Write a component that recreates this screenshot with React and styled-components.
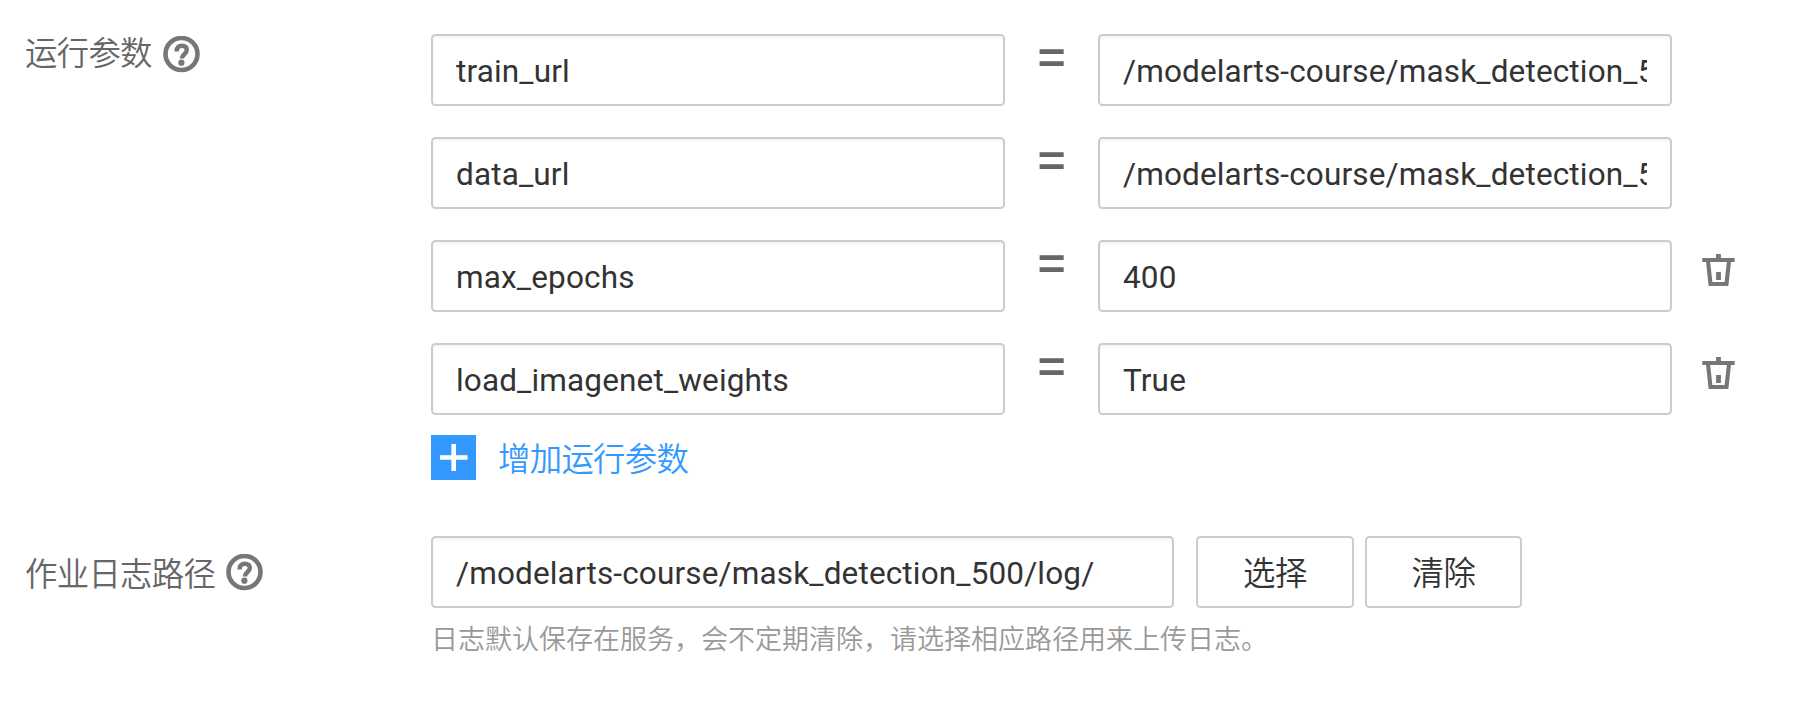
import React from "react";
import styled, { createGlobalStyle } from "styled-components";

const GlobalStyle = createGlobalStyle`
  * { box-sizing: border-box; }
  body {
    margin: 0;
    background: #fff;
    font-family: Roboto, "Noto Sans CJK SC", sans-serif;
    font-size: 31.5px;
    color: #333;
  }
`;

const Form = styled.form`
  display: flex;
  flex-direction: column;
  gap: 56px;
  padding: 34px 0 0 25px;
`;

const Field = styled.section`
  display: flex;
  align-items: flex-start;
`;

const FieldLabel = styled.div`
  display: flex;
  align-items: center;
  gap: 11px;
  flex: 0 0 406px;
  height: 40px;
  margin-top: ${(p) => p.$offset}px;
  color: #666;
  font-size: 32.4px;
  letter-spacing: -0.7px;
  font-weight: 350;
  white-space: nowrap;
`;

const LabelText = styled.span`
  padding-bottom: ${(p) => p.$lift}px;
`;

const FieldBody = styled.div`
  display: flex;
  flex-direction: column;
`;

const ParamList = styled.div`
  display: flex;
  flex-direction: column;
  gap: 31px;
`;

const ParamRow = styled.div`
  display: flex;
  align-items: flex-start;
  height: 72px;
`;

const TextInput = styled.input`
  width: ${(p) => p.$width}px;
  height: 72px;
  padding: 2px 23px 0;
  border: 2px solid #ccc;
  border-radius: 4.5px;
  outline: none;
  background: #fff;
  box-shadow: inset 0 2px 3px rgba(0, 0, 0, 0.045);
  color: #333;
  font: inherit;
  letter-spacing: 0.15px;
`;

const Equals = styled.span`
  width: 93px;
  height: 48px;
  line-height: 47px;
  text-align: center;
  font-size: 59px;
  font-weight: 400;
  color: #666;
`;

const IconButton = styled.button`
  display: flex;
  margin: 14px 0 0 30px;
  padding: 0;
  border: 0;
  background: none;
  color: #777;
`;

const AddButton = styled.button`
  display: flex;
  align-items: center;
  align-self: flex-start;
  gap: 22px;
  height: 45px;
  margin-top: 20px;
  padding: 0;
  border: 0;
  background: none;
  color: #39f;
  font: inherit;
  font-size: 32.4px;
  font-weight: 350;
  letter-spacing: -0.7px;
`;

const PathRow = styled.div`
  display: flex;
`;

const ActionButton = styled.button`
  width: ${(p) => p.$width}px;
  height: 72px;
  margin-left: ${(p) => p.$gap}px;
  padding: 0 0 4px;
  border: 2px solid #ccc;
  border-radius: 4.5px;
  background: #fff;
  color: #333;
  font: inherit;
  font-size: 32.4px;
  font-weight: 350;
  letter-spacing: -0.5px;
`;

const Hint = styled.p`
  margin: 12px 0 0;
  font-size: 27px;
  font-weight: 350;
  line-height: 40px;
  color: #999;
  white-space: nowrap;
`;

const HelpIcon = () => (
  <svg width="37" height="37" viewBox="0 0 37 37" fill="none" stroke="#777">
    <circle cx="18.5" cy="18" r="16" strokeWidth="4.6" />
    <path d="M13.7 15.4V14.6C13.7 11.6 15.6 9.7 18.8 9.7s5 1.7 5 4.4c0 4-5 4.3-5 8.5" strokeWidth="4.5" />
    <circle cx="18.4" cy="26.7" r="3.1" fill="#777" stroke="none" />
  </svg>
);

const TrashIcon = () => (
  <svg width="33" height="32" viewBox="0 0 33 32" fill="none" stroke="currentColor">
    <path d="M0.3 6H32.7" strokeWidth="4" />
    <path d="M16.5 0V5M16.5 18V26" strokeWidth="4.8" />
    <path d="M6 7L8.5 30H24.5L27 7" strokeWidth="4.1" />
  </svg>
);

const PlusIcon = () => (
  <svg width="45" height="45" viewBox="0 0 45 45">
    <rect width="45" height="45" fill="#39f" />
    <path d="M9 22.5H36.5M22.7 9V36" stroke="#fff" strokeWidth="4.6" />
  </svg>
);

const params = [
  { name: "train_url", value: "/modelarts-course/mask_detection_500/output/" },
  { name: "data_url", value: "/modelarts-course/mask_detection_500/dataset/" },
  { name: "max_epochs", value: "400", removable: true },
  { name: "load_imagenet_weights", value: "True", removable: true },
];

export default function App() {
  return (
    <>
      <GlobalStyle />
      <Form>
        <Field>
          <FieldLabel $offset={0}>
            <LabelText $lift={8}>运行参数</LabelText>
            <HelpIcon />
          </FieldLabel>
          <FieldBody>
            <ParamList>
              {params.map((p) => (
                <ParamRow key={p.name}>
                  <TextInput $width={574} defaultValue={p.name} spellCheck={false} />
                  <Equals>=</Equals>
                  <TextInput $width={574} defaultValue={p.value} spellCheck={false} />
                  {p.removable && (
                    <IconButton type="button" aria-label="删除">
                      <TrashIcon />
                    </IconButton>
                  )}
                </ParamRow>
              ))}
            </ParamList>
            <AddButton type="button">
              <PlusIcon />
              <LabelText $lift={2}>增加运行参数</LabelText>
            </AddButton>
          </FieldBody>
        </Field>
        <Field>
          <FieldLabel $offset={16}>
            <LabelText $lift={2}>作业日志路径</LabelText>
            <HelpIcon />
          </FieldLabel>
          <FieldBody>
            <PathRow>
              <TextInput
                $width={743}
                defaultValue="/modelarts-course/mask_detection_500/log/"
                spellCheck={false}
              />
              <ActionButton type="button" $width={158} $gap={22}>选择</ActionButton>
              <ActionButton type="button" $width={157} $gap={11}>清除</ActionButton>
            </PathRow>
            <Hint>日志默认保存在服务，会不定期清除，请选择相应路径用来上传日志。</Hint>
          </FieldBody>
        </Field>
      </Form>
    </>
  );
}
